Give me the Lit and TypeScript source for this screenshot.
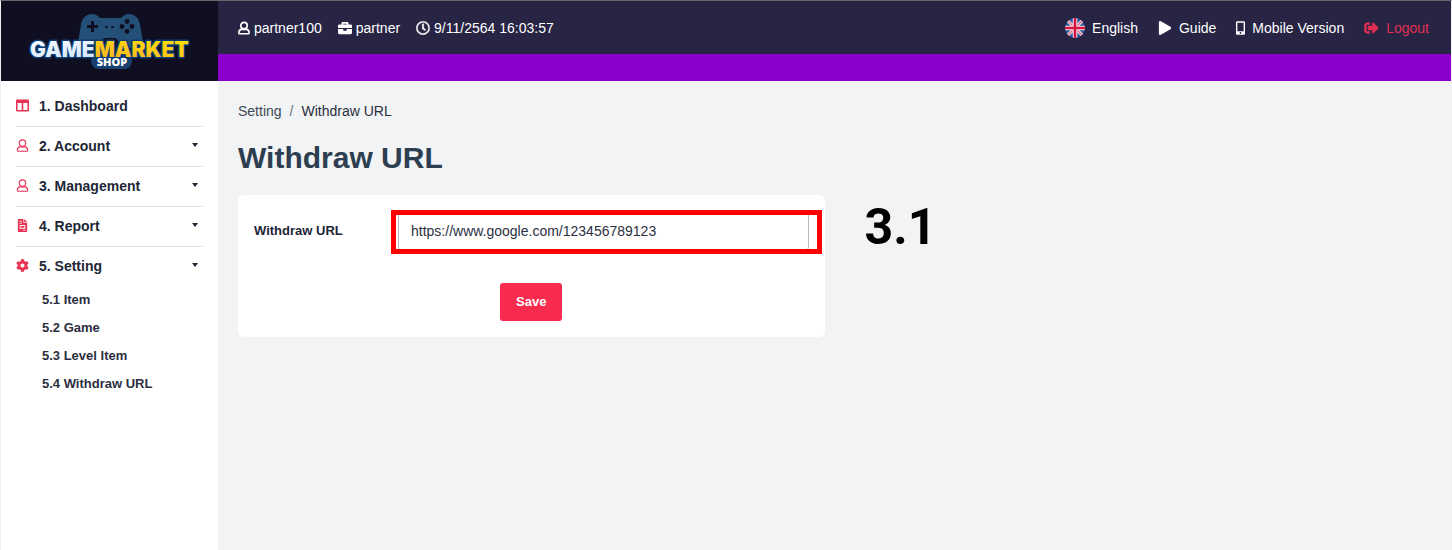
import { LitElement, html, css, svg, nothing } from "lit";
import { customElement, property, state } from "lit/decorators.js";

const ICONS: Record<string, { box: string; body: unknown }> = {
  user: {
    box: "0 0 13 14",
    body: svg`<g fill="none" stroke="currentColor" stroke-width="var(--icon-stroke, 1.8)" stroke-linejoin="round">
      <circle cx="6.5" cy="4.4" r="3.5"/>
      <path d="M4.2 8.2C2.3 8.7 1 10 1 11.7v.7c0 .5.3.8.8.8h9.4c.5 0 .8-.3.8-.8v-.7c0-1.700-1.300-3-3.200-3.500-1.400.8-3.200.8-4.600 0z"/></g>`,
  },
  briefcase: {
    box: "0 0 512 512",
    body: svg`<path d="M320 336c0 8.840-7.160 16-16 16h-96c-8.840 0-16-7.160-16-16v-48H0v144c0 25.600 22.400 48 48 48h416c25.600 0 48-22.400 48-48V288H320v48zm144-208h-80V80c0-25.600-22.400-48-48-48H176c-25.600 0-48 22.400-48 48v48H48c-25.600 0-48 22.400-48 48v80h512v-80c0-25.600-22.400-48-48-48zm-144 0H192V96h128v32z"/>`,
  },
  clock: {
    box: "0 0 512 512",
    body: svg`<path stroke="currentColor" stroke-width="12" d="M256 8C119 8 8 119 8 256s111 248 248 248 248-111 248-248S393 8 256 8zm0 448c-110.500 0-200-89.500-200-200S145.500 56 256 56s200 89.500 200 200-89.500 200-200 200zm61.800-104.400l-84.900-61.700c-3.100-2.300-4.900-5.900-4.900-9.700V116c0-6.600 5.400-12 12-12h32c6.600 0 12 5.400 12 12v141.700l66.800 48.600c5.400 3.900 6.500 11.400 2.600 16.800L334.600 349c-3.900 5.300-11.400 6.500-16.800 2.600z"/>`,
  },
  play: {
    box: "0 0 448 512",
    body: svg`<path d="M424.400 214.700L72.400 6.600C43.800-10.300 0 6.100 0 47.900V464c0 37.500 40.700 60.100 72.400 41.300l352-208c31.400-18.500 31.500-64.100 0-82.600z"/>`,
  },
  mobile: {
    box: "0 0 10 15",
    body: svg`<path fill-rule="evenodd" d="M1.500 0h7C9.300 0 10 .7 10 1.500v12c0 .8-.7 1.500-1.500 1.500h-7C.7 15 0 14.300 0 13.500v-12C0 .7.700 0 1.500 0zM1.500 1.700v9.300h7V1.700zM5 12a1 1 0 1 0 0 2 1 1 0 0 0 0-2z"/>`,
  },
  logout: {
    box: "0 0 512 512",
    body: svg`<path d="M497 273L329 441c-15 15-41 4.500-41-17v-96H152c-13.300 0-24-10.700-24-24v-96c0-13.300 10.700-24 24-24h136V88c0-21.400 25.900-32 41-17l168 168c9.300 9.400 9.300 24.600 0 34zM192 436v-40c0-6.600-5.400-12-12-12H96c-17.700 0-32-14.300-32-32V160c0-17.700 14.300-32 32-32h84c6.600 0 12-5.400 12-12V76c0-6.600-5.400-12-12-12H96c-53 0-96 43-96 96v192c0 53 43 96 96 96h84c6.600 0 12-5.400 12-12z" stroke="currentColor" stroke-width="20"/>`,
  },
  columns: {
    box: "0 0 13 12",
    body: svg`<path fill-rule="evenodd" d="M1.200 0h10.600C12.500 0 13 .5 13 1.200v9.600c0 .7-.5 1.200-1.200 1.200H1.200C.5 12 0 11.500 0 10.800V1.200C0 .5.500 0 1.200 0zM1.500 3.500v7h4.200v-7zM7.300 3.500v7h4.200v-7z"/>`,
  },
  report: {
    box: "0 0 10 14",
    body: svg`<path fill-rule="evenodd" d="M.8 0H6v3.400c0 .4.300.7.700.7H10v9.100c0 .5-.3.800-.8.800H.8c-.5 0-.8-.3-.8-.8V.8C0 .3.300 0 .8 0zM1.500 2v.8h3V2zM1.500 4v.8h3V4zM2 6.500v4h6v-4zM3 7.500h4v2H3zM5.500 11.700v.8h3v-.8z"/><path d="M6.800 0L10 3.300H6.800z"/>`,
  },
  cog: {
    box: "0 0 512 512",
    body: svg`<path d="M487.400 315.700l-42.600-24.600c4.300-23.200 4.300-47 0-70.200l42.600-24.600c4.900-2.800 7.100-8.600 5.500-14-11.100-35.600-30-67.800-54.700-94.600-3.800-4.100-10-5.100-14.800-2.300L380.800 110c-17.900-15.400-38.500-27.300-60.800-35.100V25.800c0-5.600-3.900-10.500-9.400-11.700-36.700-8.200-74.300-7.800-109.200 0-5.500 1.200-9.400 6.100-9.400 11.700V75c-22.200 7.900-42.800 19.800-60.800 35.100L88.700 85.500c-4.900-2.800-11-1.900-14.800 2.300-24.700 26.700-43.600 58.900-54.700 94.600-1.700 5.400.6 11.200 5.500 14L67.300 221c-4.300 23.200-4.300 47 0 70.200l-42.600 24.600c-4.900 2.800-7.100 8.600-5.500 14 11.100 35.600 30 67.800 54.700 94.600 3.800 4.100 10 5.100 14.800 2.300l42.600-24.600c17.900 15.400 38.500 27.300 60.800 35.100v49.200c0 5.600 3.900 10.500 9.400 11.700 36.700 8.200 74.300 7.800 109.200 0 5.500-1.200 9.400-6.100 9.400-11.700v-49.200c22.200-7.900 42.800-19.800 60.800-35.100l42.600 24.600c4.900 2.800 11 1.900 14.800-2.300 24.700-26.700 43.600-58.900 54.700-94.600 1.500-5.500-.7-11.300-5.600-14.100zM256 336c-44.100 0-80-35.900-80-80s35.900-80 80-80 80 35.900 80 80-35.900 80-80 80z"/>`,
  },
  flag: {
    box: "0 0 20 20",
    body: svg`<clipPath id="disc"><circle cx="10" cy="10" r="10"/></clipPath>
      <g clip-path="url(#disc)"><path fill="#2a5ba0" d="M0 0h20v20H0z"/>
      <path stroke="#f3dfe8" stroke-width="3.200" d="M0 0l20 20M20 0L0 20"/>
      <path stroke="#dd5a78" stroke-width="1.200" d="M0 0l20 20M20 0L0 20"/>
      <path stroke="#f6e6ee" stroke-width="4.600" d="M10 0v20M0 10h20"/>
      <path stroke="#d8143c" stroke-width="2.600" d="M10 0v20M0 10h20"/></g>`,
  },
  caret: { box: "0 0 6 4", body: svg`<path d="M0 0h6L3 4z"/>` },
};

@customElement("app-icon")
class AppIcon extends LitElement {
  static styles = css`
    :host { display: inline-flex; flex: none; justify-content: center; }
    .glyph { display: block; width: 100%; height: 100%; fill: currentColor; }
  `;
  @property() name = "user";
  render() {
    const icon = ICONS[this.name];
    return html`<svg class="glyph" viewBox=${icon.box} aria-hidden="true">${icon.body}</svg>`;
  }
}

@customElement("brand-logo")
class BrandLogo extends LitElement {
  static styles = css`
    :host { display: block; width: 160px; height: 54px; }
    .art { display: block; width: 100%; height: 100%; overflow: visible; }
    .word { font: 900 21px Inter, "Liberation Sans", sans-serif; paint-order: stroke; stroke: #0d3a72; stroke-width: 3px; stroke-linejoin: round; }
    .shop { font: 800 11px "Open Sans", "Noto Sans", sans-serif; fill: #fff; }
  `;
  render() {
    return html`<svg class="art" viewBox="0 0 160 54" role="img" aria-label="Game Market Shop">
      <defs>
        <linearGradient id="ice" x1="0" y1="0" x2="1" y2="1">
          <stop offset="0" stop-color="#fff"/><stop offset=".5" stop-color="#d9ebff"/><stop offset="1" stop-color="#9cc6f7"/>
        </linearGradient>
        <linearGradient id="gold" x1="0" y1="1" x2="1" y2="0">
          <stop offset="0" stop-color="#f5a52a"/><stop offset=".5" stop-color="#fcc419"/><stop offset="1" stop-color="#ffe600"/>
        </linearGradient>
      </defs>
      <path fill="#245078" d="M47 34L51 11C52 4 56 0 62 0c4 0 6 2 8 4h21c2-2 4-4 8-4 6 0 10 4 11 11l4 23H92l-4-7c-1-2-2-3-4-3h-8c-2 0-3 1-4 3l-4 7z"/>
      <path fill="#100f22" d="M61 7h3v4h4v3h-4v4h-3v-4h-4v-3h4z"/>
      <g fill="#100f22"><circle cx="97" cy="7.500" r="2.400"/><circle cx="97" cy="17.500" r="2.400"/><circle cx="92" cy="12.500" r="2.400"/><circle cx="102" cy="12.500" r="2.400"/>
      <rect x="75" y="12" width="3" height="2" rx="1"/><rect x="81" y="12" width="3" height="2" rx="1"/></g>
      <rect x="61" y="40" width="41" height="15" rx="7.500" fill="#17406e"/>
      <text class="word" x="0" y="43"><tspan fill="url(#ice)">GAME</tspan><tspan fill="url(#gold)">MARKET</tspan></text>
      <text class="shop" x="82" y="52" text-anchor="middle">SHOP</text>
    </svg>`;
  }
}

interface Section {
  label: string;
  icon: string;
  expandable: boolean;
  children: string[];
}

@customElement("side-menu")
class SideMenu extends LitElement {
  static styles = css`
    :host { display: block; background: #fff; padding: 6px 15px; }
    .list, .sub { list-style: none; margin: 0; padding: 0; }
    .section { border-bottom: 1px solid #e3e4e6; }
    .section:last-child { border-bottom: 0; }
    .row {
      display: flex; align-items: center; box-sizing: border-box; width: 100%; height: 39px;
      padding: 0 5px 2px 0; border: 0; background: none; color: #212636; text-decoration: none;
      font: 700 14px/20px "Liberation Sans", Arial, sans-serif; text-align: left; cursor: pointer;
    }
    .icon { width: 13px; height: 13px; margin-right: 10px; color: #ea3353; --icon-stroke: 1.200; }
    .text { flex: 1; }
    .caret { width: 6px; height: 4px; margin-bottom: 2px; }
    .sub { display: grid; gap: 2px; padding: 1px 0 0 26px; }
    .link { display: block; font: 700 13px/26px "Liberation Sans", Arial, sans-serif; color: #2b2f3f; text-decoration: none; }
  `;
  @state() private open = 4;
  private sections: Section[] = [
    { label: "1. Dashboard", icon: "columns", expandable: false, children: [] },
    { label: "2. Account", icon: "user", expandable: true, children: [] },
    { label: "3. Management", icon: "user", expandable: true, children: [] },
    { label: "4. Report", icon: "report", expandable: true, children: [] },
    {
      label: "5. Setting", icon: "cog", expandable: true,
      children: ["5.1 Item", "5.2 Game", "5.3 Level Item", "5.4 Withdraw URL"],
    },
  ];
  private toggle(i: number) {
    this.open = this.open === i ? -1 : i;
  }
  render() {
    return html`<nav><ul class="list">
      ${this.sections.map((s, i) => html`<li class="section">
        ${s.expandable
          ? html`<button class="row" type="button" aria-expanded=${this.open === i} @click=${() => this.toggle(i)}>
              <app-icon class="icon" name=${s.icon}></app-icon><span class="text">${s.label}</span>
              <app-icon class="caret" name="caret"></app-icon>
            </button>`
          : html`<a class="row" href="#"><app-icon class="icon" name=${s.icon}></app-icon><span class="text">${s.label}</span></a>`}
        ${this.open === i && s.children.length
          ? html`<ul class="sub">${s.children.map((c) => html`<li><a class="link" href="#">${c}</a></li>`)}</ul>`
          : nothing}
      </li>`)}
    </ul></nav>`;
  }
}

@customElement("top-bar")
class TopBar extends LitElement {
  static styles = css`
    :host { display: block; }
    .bar {
      display: flex; justify-content: space-between; align-items: center; height: 53px; padding: 0 22px 0 20px;
      background: #272444; color: #fff; font: 14px/20px "Liberation Sans", Arial, sans-serif;
    }
    .group, .item { display: flex; align-items: center; }
    .info { gap: 16px; }
    .actions { gap: 20px; }
    .info .item { gap: 4px; }
    .actions .item { gap: 7px; color: inherit; text-decoration: none; }
    .actions .danger { color: #e22f52; }
    .icon { width: 14px; height: 14px; }
    .user { width: 12px; }
    .mobile { width: 9px; }
    .logout { width: 15px; }
    .flag { width: 20px; height: 20px; }
    .strip { height: 27px; background: #8b00cc; }
  `;
  render() {
    return html`<header>
      <div class="bar">
        <div class="group info">
          <span class="item"><app-icon class="icon user" name="user"></app-icon>partner100</span>
          <span class="item"><app-icon class="icon" name="briefcase"></app-icon>partner</span>
          <span class="item"><app-icon class="icon" name="clock"></app-icon>9/11/2564 16:03:57</span>
        </div>
        <div class="group actions">
          <a class="item" href="#"><app-icon class="icon flag" name="flag"></app-icon>English</a>
          <a class="item" href="#"><app-icon class="icon" name="play"></app-icon>Guide</a>
          <a class="item" href="#"><app-icon class="icon mobile" name="mobile"></app-icon>Mobile Version</a>
          <a class="item danger" href="#"><app-icon class="icon logout" name="logout"></app-icon>Logout</a>
        </div>
      </div>
      <div class="strip"></div>
    </header>`;
  }
}

@customElement("withdraw-page")
class WithdrawPage extends LitElement {
  static styles = css`
    :host { display: block; padding: 20px; font: 14px/20px "Liberation Sans", Arial, sans-serif; color: #2b2f3f; }
    .crumbs { display: flex; gap: 8px; list-style: none; margin: 0; padding: 0; }
    .crumb { color: #3d4956; text-decoration: none; }
    .slash { color: #6c757d; }
    .title { margin: 19px 0; font-size: 30px; line-height: 36px; color: #2c3e50; }
    .columns { display: grid; grid-template-columns: 1fr 1fr; gap: 20px; }
    .card { display: grid; gap: 32px; padding: 16px; border-radius: 6px; background: #fff; }
    .row { display: grid; grid-template-columns: 144px 1fr; align-items: center; }
    .label { font-size: 13px; font-weight: 700; color: #212636; }
    .field { position: relative; }
    .input {
      display: block; box-sizing: border-box; width: 100%; height: 40px; padding: 0 12px;
      border: 1px solid #b9bcbe; border-radius: 4px; background: #fff; color: #2b2f3f; font: inherit; outline: 0;
    }
    .marker { position: absolute; inset: -1px -13px -3px -7px; border: 5px solid #f00; pointer-events: none; }
    .save {
      justify-self: center; height: 38px; padding: 0 16px; border: 0; border-radius: 3px;
      background: #f82b4f; color: #fff; font: 700 13px/20px "Liberation Sans", Arial, sans-serif; cursor: pointer;
    }
    .step { margin: 0; padding: 0 20px; font: 700 50px/64px Roboto, sans-serif; color: #000; }
  `;
  @state() private url = "https://www.google.com/123456789123";
  render() {
    return html`<main>
      <ol class="crumbs">
        <li><a class="crumb" href="#">Setting</a></li>
        <li class="slash" aria-hidden="true">/</li>
        <li aria-current="page">Withdraw URL</li>
      </ol>
      <h1 class="title">Withdraw URL</h1>
      <div class="columns">
        <form class="card" @submit=${(e: Event) => e.preventDefault()}>
          <div class="row">
            <label class="label" for="url">Withdraw URL</label>
            <div class="field">
              <input class="input" id="url" type="text" .value=${this.url}
                @input=${(e: Event) => (this.url = (e.target as HTMLInputElement).value)} />
              <div class="marker"></div>
            </div>
          </div>
          <button class="save" type="submit">Save</button>
        </form>
        <p class="step">3.1</p>
      </div>
    </main>`;
  }
}

@customElement("app-root")
class AppRoot extends LitElement {
  static styles = css`
    :host {
      display: grid; grid-template-columns: 217px 1fr; grid-template-rows: 80px 1fr; box-sizing: border-box;
      min-height: 100vh; border: solid #f0f0f2; border-width: 1px 1px 0; border-top-color: #68686c; background: #f1f3f5;
    }
    .brand { display: flex; align-items: center; justify-content: center; background: #100f22; }
  `;
  render() {
    return html`
      <a class="brand" href="#" aria-label="Home"><brand-logo></brand-logo></a>
      <top-bar></top-bar>
      <side-menu></side-menu>
      <withdraw-page></withdraw-page>
    `;
  }
}
